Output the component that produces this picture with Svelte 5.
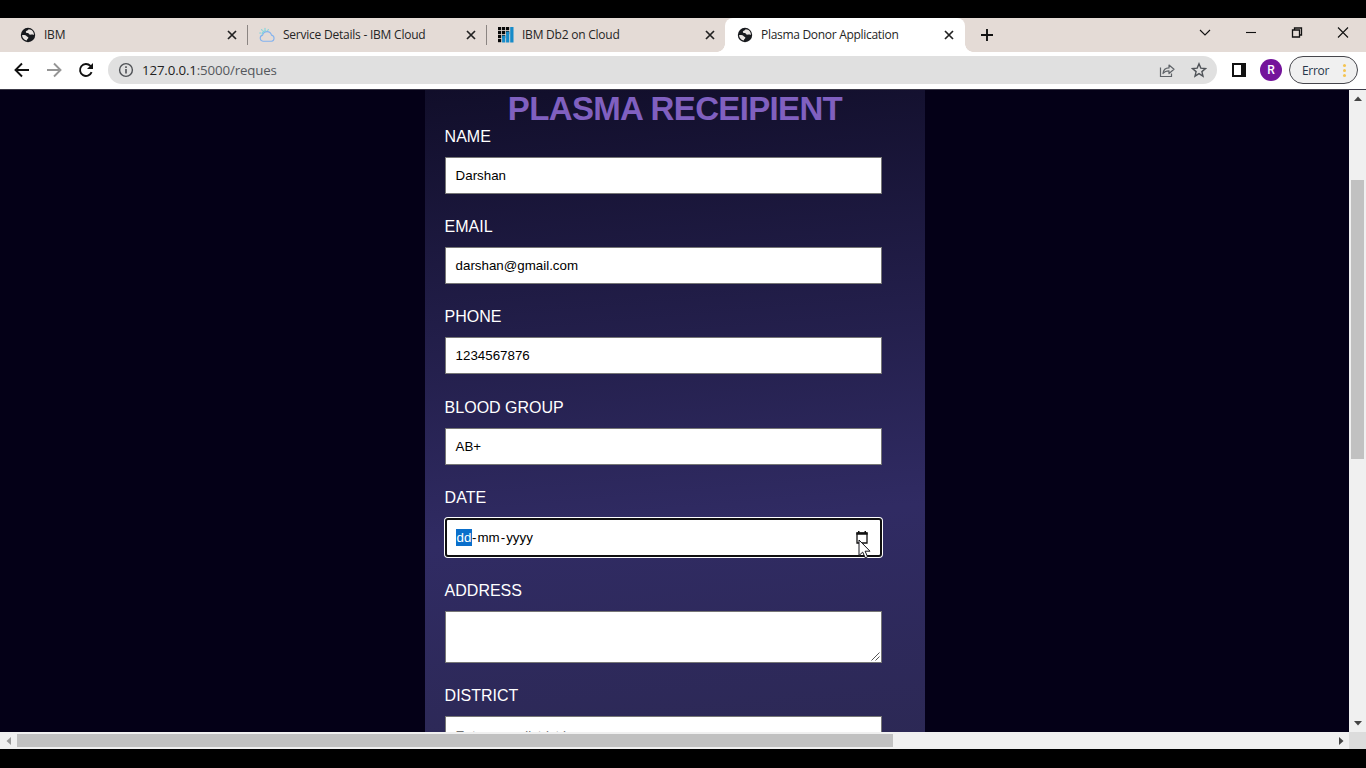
<script>
  const tabs = [
    { title: 'IBM', icon: 'globe' },
    { title: 'Service Details - IBM Cloud', icon: 'cloud' },
    { title: 'IBM Db2 on Cloud', icon: 'db2' },
    { title: 'Plasma Donor Application', icon: 'globe', active: true }
  ];
  const fields = [
    { label: 'NAME', value: 'Darshan' },
    { label: 'EMAIL', value: 'darshan@gmail.com' },
    { label: 'PHONE', value: '1234567876' },
    { label: 'BLOOD GROUP', value: 'AB+' }
  ];
  const dots = [
    [0, 0], [4, 0], [8, 0], [0, 4], [4, 4], [8, 4], [0, 8], [4, 8], [0, 12]
  ];
</script>

<div class="screen">
  <header class="tabstrip">
    {#each tabs as tab}
      <div class="tab" class:active={tab.active}>
        {#if tab.icon === 'globe'}
          <svg class="fav" viewBox="0 0 16 16">
            <circle cx="8" cy="8" r="7.2" fill="#17191d" />
            <path d="M2 8.2c1.8-.3 3.600 0 4.700 1 .9.800 1.800.600 1.600 1.700-.200.900-1.300.900-1.500 2.500C4.300 13 2.300 11.200 2 8.200zM8.600 2.200c-.2 1.500-2.600 1.100-2.800 2.600-.1 1.100 1 1.400 2.200 1.300.9 0 .7 1.300 1.700 1.500 1.300.300 2.400-.400 4.200.5.300-3-1.900-5.800-5.300-5.900z" fill="#e9e4e1" />
          </svg>
        {:else if tab.icon === 'cloud'}
          <svg class="fav" viewBox="0 0 16 16" fill="none" stroke-width="1.1" stroke-linecap="round">
            <path d="M4 14.200a3.100 3.100 0 0 1-.4-6.100 4.600 4.600 0 0 1 8.900 0A3.100 3.100 0 0 1 12.500 14.200z" stroke="#83b2ef" />
            <path d="M3.300 7.300a3 3 0 0 1 3.500-3.400M6 1.200v1.200M2.500 2.600l.8.8M.7 6h1.200M9.400 2.500l-.7.800" stroke="#7fd5dc" />
          </svg>
        {:else}
          <svg class="fav" viewBox="0 0 16 16">
            <g fill="#080808">
              {#each dots as [x, y]}<rect {x} {y} width="3.2" height="3.2" />{/each}
            </g>
            <path d="M12.200 0h3.300v15.500h-3.300zM8.100 4.500h3.200v11H8.100zM4.100 8.500h3.200v7H4.100z" fill="#168bc9" />
          </svg>
        {/if}
        <span class="tab-title">{tab.title}</span>
        <svg class="close" viewBox="0 0 10 10"><path d="M1 1l8 8M9 1L1 9" stroke="#222" stroke-width="1.700" /></svg>
      </div>
    {/each}
    <svg class="plus" viewBox="0 0 12 12"><path d="M6 0v12M0 6h12" stroke="#111" stroke-width="1.900" /></svg>
    <div class="window">
      <svg width="12" height="12" viewBox="0 0 12 12"><path d="M1 3l5 5 5-5" /></svg>
      <svg width="12" height="12" viewBox="0 0 12 12"><path d="M1 5.500h10" /></svg>
      <svg width="12" height="12" viewBox="0 0 12 12"><path d="M1.500 3h7v7h-7zM3.500 3V1h7v7h-2" stroke-width="1.300" /></svg>
      <svg width="12" height="12" viewBox="0 0 12 12"><path d="M1 .5l10 10M11 .5L1 10.500" /></svg>
    </div>
  </header>

  <div class="toolbar">
    <div class="nav">
      <svg width="16" height="16" viewBox="0 0 16 16"><path d="M15 8H2M8 1.500L1.500 8 8 14.500" stroke="#111" /></svg>
      <svg width="16" height="16" viewBox="0 0 16 16"><path d="M1 8h13M8 1.500L14.500 8 8 14.500" stroke="#959595" /></svg>
      <svg width="16" height="16" viewBox="0 0 16 16"><path d="M13.600 10.200A6 6 0 1 1 12.400 3.900L13.500 5" stroke="#111" /><path d="M15 1v6H9z" fill="#111" /></svg>
    </div>
    <div class="omnibox">
      <svg width="16" height="16" viewBox="0 0 16 16" fill="none" stroke="#4f5256" stroke-width="1.400"><circle cx="8" cy="8" r="6.400" /><path d="M8 7v4.400M8 4.300v1.600" stroke-width="1.600" /></svg>
      <span class="url"><b>127.0.0.1</b>:5000/reques</span>
      <svg width="16" height="16" viewBox="0 0 16 16" fill="none" stroke="#5f6368" stroke-width="1.200"><path d="M1.500 5.500v9h11v-3" /><path d="M4 11.500c.4-4 2.600-5.500 6-5.600V3l5 4.300-5 4.200V8.800c-2.700 0-4.500.7-6 2.700z" stroke-linejoin="round" /></svg>
      <svg class="star" width="16" height="16" viewBox="0 0 16 16" fill="none" stroke="#4f5358" stroke-width="1.400"><path d="M8 1.800l1.800 4.300 4.700.4-3.600 3.100 1.100 4.600L8 11.700l-4 2.500 1.100-4.600-3.600-3.100 4.700-.4z" /></svg>
    </div>
    <svg class="panel" viewBox="0 0 14 14"><path d="M1 1h12v12H1z" fill="#fff" stroke="#111" stroke-width="2" /><path d="M9 1h4v12H9z" fill="#111" /></svg>
    <div class="avatar">R</div>
    <div class="error"><span>Error</span><i></i></div>
  </div>

  <div class="body">
    <main>
      <section class="card">
        <h1>PLASMA RECEIPIENT</h1>
        {#each fields as f}
          <div class="field">
            <div class="label">{f.label}</div>
            <div class="input">{f.value}</div>
          </div>
        {/each}
        <div class="field date-field">
          <div class="label">DATE</div>
          <div class="input focused">
            <span class="date"><em>dd</em>-<u>mm</u>-<u>yyyy</u></span>
            <span class="picker">
              <svg width="12" height="13" viewBox="0 0 12 13"><path d="M1 2h10v10H1z" fill="none" stroke="#111" stroke-width="1.300" /><path d="M.4 1.500h11.200v2.200H.4zM2 0h1.500v2H2zM8.500 0H10v2H8.500z" fill="#111" /></svg>
              <svg class="cursor" width="13" height="20" viewBox="0 0 13 20"><path d="M1 1v15.500l3.700-3.400 2.500 5.700 2.400-1-2.500-5.600H12z" fill="#fff" stroke="#15151c" stroke-width="1" /></svg>
            </span>
          </div>
        </div>
        <div class="field area-field">
          <div class="label">ADDRESS</div>
          <div class="input area">
            <svg width="9" height="9" viewBox="0 0 9 9"><path d="M.5 8.500l8-8M4.500 8.500l4-4" stroke="#555" stroke-width="1" /></svg>
          </div>
        </div>
        <div class="field">
          <div class="label">DISTRICT</div>
          <div class="input hint">Enter your district here</div>
        </div>
      </section>
    </main>
    <div class="vscroll">
      <svg width="8" height="5" viewBox="0 0 8 5"><path d="M0 5l4-4.500L8 5z" fill="#444" /></svg>
      <div class="vtrack"><div class="vthumb"></div></div>
      <svg width="8" height="5" viewBox="0 0 8 5"><path d="M0 0l4 4.500L8 0z" fill="#444" /></svg>
    </div>
  </div>
  <div class="hscroll">
    <svg width="5" height="8" viewBox="0 0 5 8"><path d="M5 0L.5 4 5 8z" fill="#999" /></svg>
    <div class="hthumb"></div>
    <svg class="right" width="5" height="8" viewBox="0 0 5 8"><path d="M0 0l4.500 4L0 8z" fill="#444" /></svg>
    <div class="corner"></div>
  </div>
</div>

<style>
  :global(body) { margin: 0; background: #000; overflow: hidden; }
  .screen { width: 1366px; height: 768px; box-sizing: border-box; padding: 18px 0 19px; background: #000; display: flex; flex-direction: column; font-family: "Open Sans", sans-serif; }
  svg { display: block; flex: none; }
  .tabstrip { height: 34px; background: #e4dbd6; display: flex; align-items: center; padding-left: 8px; flex: none; }
  .tab { width: 239px; height: 34px; box-sizing: border-box; display: flex; align-items: center; padding: 0 10px 0 12px; position: relative; }
  .tab:nth-child(-n+2)::after { content: ""; position: absolute; right: -1px; top: 7px; width: 1px; height: 20px; background: #8b8582; }
  .tab.active { width: 240px; padding-right: 11px; background: #fff; border-radius: 8px 8px 0 0; }
  .tab.active::before, .tab.active::after { content: ""; position: absolute; bottom: 0; width: 8px; height: 8px; }
  .tab.active::before { left: -8px; background: radial-gradient(circle at 0 0, transparent 7.5px, #fff 8px); }
  .tab.active::after { right: -8px; background: radial-gradient(circle at 100% 0, transparent 7.5px, #fff 8px); }
  .fav { width: 16px; height: 16px; }
  .tab-title { margin-left: 8px; font-size: 12px; line-height: 16px; color: #252525; white-space: nowrap; flex: 1; letter-spacing: -0.23px; }
  .tab.active .tab-title { letter-spacing: -0.3px; }
  .close { width: 10px; height: 10px; }
  .plus { width: 12px; height: 12px; margin-left: 16px; }
  .window { margin-left: auto; display: flex; gap: 34px; padding: 0 17px 4px 0; }
  .window svg { fill: none; stroke: #111; stroke-width: 1.1; }
  .toolbar { height: 37px; box-sizing: border-box; background: #fff; display: flex; align-items: center; padding: 0 0 1px 14px; flex: none; }
  .nav { display: flex; gap: 16px; width: 94px; }
  .nav svg { fill: none; stroke-width: 1.9; }
  .omnibox { width: 1109px; height: 28px; border-radius: 14px; background: #e0e0e0; display: flex; align-items: center; box-sizing: border-box; padding: 0 10px; }
  .url { font-size: 13.3px; color: #55585d; margin-left: 8px; flex: 1; letter-spacing: -0.15px; }
  .url b { font-weight: 400; color: #222; }
  .star { margin-left: 16px; }
  .panel { width: 14px; height: 14px; margin-left: 15px; }
  .avatar { width: 22px; height: 22px; border-radius: 50%; background: #74149b; color: #fff; font: 500 12px/22px Roboto, sans-serif; text-align: center; margin-left: 14px; }
  .error { width: 69px; height: 28px; border: 1.5px solid #46464c; border-radius: 14px; box-sizing: border-box; background: #f0f0f0; margin-left: 7px; display: flex; align-items: center; padding-left: 12px; font-size: 12px; letter-spacing: -0.3px; color: #26364a; }
  .error i { width: 3px; height: 3px; border-radius: 50%; background: #f4c451; box-shadow: 0 -5px #f4c451, 0 5px #f4c451; margin-left: 14px; }
  .body { flex: 1; min-height: 0; display: flex; border-top: 1px solid #3c3a48; }
  main { width: 1349px; background: #040017; overflow: hidden; display: flex; }
  .card { width: 500px; height: 900px; margin-left: 425px; box-sizing: border-box; padding: 0 43px 0 20px; background: linear-gradient(175deg, #110e2a 0, #302b63 455px, #2a274e 800px); font-family: "Liberation Sans", Arial, sans-serif; }
  h1 { margin: 0 0 0 -20px; width: 500px; height: 36.5px; box-sizing: border-box; text-align: center; font-size: 33px; line-height: 38px; color: #8060c0; white-space: nowrap; letter-spacing: -0.65px; }
  .field { height: 90.4px; }
  .label { height: 30px; line-height: 20px; font-size: 16px; color: #fff; margin-left: -0.4px; }
  .input { height: 37px; box-sizing: border-box; border: 1px solid #767676; background: #fff; color: #000; font-size: 13.333px; line-height: 35px; padding: 0 9.6px; }
  .date-field { height: 92.7px; }
  .focused { height: 39px; line-height: 35px; border: 2px solid #101010; border-radius: 3px; box-shadow: 0 0 0 1px #fff; display: flex; align-items: center; justify-content: space-between; padding: 0 12px 0 9px; }
  .date em { font-style: normal; background: #0a6fcb; color: #fff; padding: 1px 0.6px; }
  .date u { text-decoration: none; padding: 0 1px; }
  .picker { position: relative; }
  .cursor { position: absolute; left: 2px; top: 8px; }
  .area-field { height: 105.1px; }
  .area { height: 52px; display: flex; align-items: flex-end; justify-content: flex-end; padding: 0 1px 1px; }
  .hint { color: #757575; line-height: 37px; }
  .vscroll { width: 17px; background: #f0f0f0; display: flex; flex-direction: column; align-items: center; padding: 6px 0 6px; box-sizing: border-box; }
  .vtrack { flex: 1; padding-top: 79px; }
  .vthumb { width: 13px; height: 279px; background: #c1c1c1; }
  .hscroll { height: 17px; background: #f0f0f0; display: flex; align-items: center; padding-left: 6px; flex: none; }
  .hthumb { width: 876px; height: 13px; background: #c1c1c1; margin-left: 6px; }
  .right { margin-left: auto; margin-right: 5px; }
  .corner { width: 17px; height: 17px; background: #dcdcdc; }
</style>
